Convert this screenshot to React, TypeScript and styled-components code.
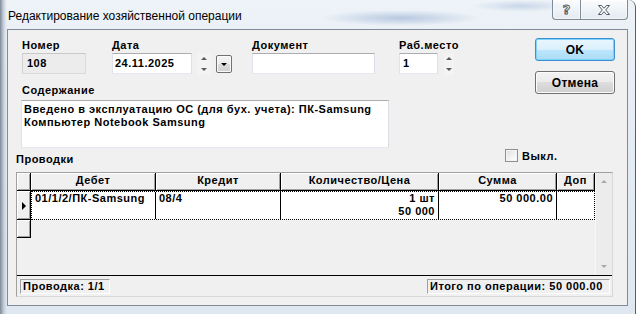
import React from 'react';
import styled, { createGlobalStyle } from 'styled-components';

const GlobalStyle = createGlobalStyle`
	html, body {
		margin: 0;
		padding: 0;
		background: #ffffff;
	}
	body {
		font-family: "Liberation Sans", Arial, sans-serif;
		color: #000;
	}
`;

const Window = styled.div`
	width: 636px;
	height: 314px;
	box-sizing: border-box;
	display: flex;
	flex-direction: column;
	padding: 0 7px 8px 6px;
	border-left: 1px solid #8793a0;
	border-right: 1px solid #55606c;
	border-top-right-radius: 7px;
	overflow: hidden;
	background:
		linear-gradient(90deg, rgba(80, 92, 110, 0.55) 0px, rgba(140, 152, 170, 0.3) 3px, rgba(255, 255, 255, 0) 6px),
		radial-gradient(ellipse 80px 8px at 400px 18px, rgba(60, 105, 170, 0.3), rgba(60, 105, 170, 0)),
		radial-gradient(ellipse 50px 6px at 520px 6px, rgba(90, 130, 190, 0.25), rgba(90, 130, 190, 0)),
		linear-gradient(180deg, #eef3f8 0%, #e6edf4 30%, #dfe7f0 100%);
`;

const TitleBar = styled.div`
	flex: none;
	height: 29px;
	display: flex;
	align-items: flex-start;
`;

const Title = styled.div`
	padding: 9px 0 0 1px;
	font-size: 12px;
	line-height: 14px;
	white-space: nowrap;
`;

const Captions = styled.div`
	margin-left: auto;
	display: flex;
`;

const CaptionButton = styled.div<{ $w: number; $side: 'left' | 'right' }>`
	box-sizing: border-box;
	width: ${(p) => p.$w}px;
	height: 20px;
	display: flex;
	align-items: center;
	justify-content: center;
	border: 1px solid #7f8a97;
	border-top: none;
	${(p) => (p.$side === 'left' ? 'border-right: none; border-bottom-left-radius: 4px;' : 'border-bottom-right-radius: 4px;')}
	background: linear-gradient(180deg, rgba(255, 255, 255, 0.75) 0%, rgba(240, 244, 248, 0.6) 50%, rgba(220, 228, 236, 0.6) 100%);
	box-shadow: inset 0 0 0 1px rgba(255, 255, 255, 0.5);
`;

const HelpGlyph = styled.span`
	font-family: "DejaVu Sans", sans-serif;
	font-size: 13px;
	font-weight: bold;
	line-height: 13px;
	color: #ffffff;
	-webkit-text-stroke: 1px #4d5966;
	margin-top: -1px;
`;

const Client = styled.div`
	flex: none;
	height: 277px;
	box-sizing: border-box;
	border: 1px solid #7f8b98;
	background: #f0f0f0;
	padding: 8px 14px 0 8px;
	display: flex;
	flex-direction: column;
	font-size: 11px;
	font-weight: bold;
	letter-spacing: 0.5px;
`;

const TopArea = styled.div`
	display: flex;
	align-items: flex-start;
	padding-left: 6px;
	margin-right: -2px;
	height: 109px;
`;

const FieldsBlock = styled.div`
	display: flex;
	flex-direction: column;
	padding-top: 1px;
`;

const FieldsRow = styled.div`
	display: flex;
	align-items: flex-start;
`;

const Field = styled.div<{ $gap?: number }>`
	display: flex;
	flex-direction: column;
	margin-left: ${(p) => p.$gap ?? 0}px;
`;

const FieldLabel = styled.div`
	height: 14px;
	line-height: 13px;
	white-space: nowrap;
`;

const InputLine = styled.div`
	display: flex;
	align-items: flex-start;
`;

const TextBox = styled.div<{ $w: number; $pad?: number; $readOnly?: boolean }>`
	box-sizing: border-box;
	width: ${(p) => p.$w}px;
	height: 21px;
	border: 1px solid;
	border-color: ${(p) => (p.$readOnly ? '#c9c9c9 #dadada #dadada #d2d2d2' : '#abadb3 #dbdfe6 #e3e9ef #e2e3ea')};
	background: ${(p) => (p.$readOnly ? '#ececec' : '#ffffff')};
	padding: 0 ${(p) => p.$pad ?? 3}px;
	line-height: 19px;
	white-space: nowrap;
`;

const Spin = styled.div<{ $w: number }>`
	box-sizing: border-box;
	width: ${(p) => p.$w}px;
	height: 22px;
	margin-left: 6px;
	display: flex;
	flex-direction: column;
	justify-content: space-between;
	align-items: center;
	padding: 4px 0 4px;
	background: #f3f3f3;
`;

const Arrow = styled.span<{ $dir: 'up' | 'down'; $size?: number; $color?: string }>`
	width: 0;
	height: 0;
	border-left: ${(p) => p.$size ?? 3}px solid transparent;
	border-right: ${(p) => p.$size ?? 3}px solid transparent;
	${(p) =>
		p.$dir === 'up'
			? `border-bottom: ${p.$size ?? 3}px solid ${p.$color ?? '#5a5a5a'};`
			: `border-top: ${p.$size ?? 3}px solid ${p.$color ?? '#5a5a5a'};`}
`;

const DropButton = styled.div`
	box-sizing: border-box;
	width: 16px;
	height: 18px;
	margin: 2px 0 0 6px;
	border: 1px solid #707070;
	border-radius: 2px;
	background: linear-gradient(180deg, #f4f4f4 0%, #ebebeb 50%, #dddddd 50%, #d0d0d0 100%);
	box-shadow: inset 0 0 0 1px #fbfbfb;
	display: flex;
	align-items: center;
	justify-content: center;
`;

const SectionLabel = styled.div`
	margin-top: 9px;
	height: 16px;
	line-height: 13px;
`;

const Memo = styled.div`
	box-sizing: border-box;
	width: 368px;
	height: 48px;
	margin-left: -1px;
	background: #ffffff;
	border: 1px solid;
	border-color: #abadb3 #dbdfe6 #e3e9ef #e2e3ea;
	padding: 2px;
	line-height: 13px;
	white-space: nowrap;
`;

const ButtonsColumn = styled.div`
	margin-left: auto;
	display: flex;
	flex-direction: column;
	gap: 10px;
`;

const DialogButton = styled.div<{ $primary?: boolean }>`
	box-sizing: border-box;
	width: 80px;
	height: 23px;
	border-radius: 3px;
	display: flex;
	align-items: center;
	justify-content: center;
	font-size: 12px;
	letter-spacing: 0.3px;
	border: 1px solid ${(p) => (p.$primary ? '#3c8fd0' : '#707070')};
	background: ${(p) =>
		p.$primary
			? 'linear-gradient(180deg, #eaf6fd 0%, #d9f0fc 50%, #bee6fd 50%, #a9dbf6 100%)'
			: 'linear-gradient(180deg, #f2f2f2 0%, #ebebeb 50%, #dddddd 50%, #cfcfcf 100%)'};
	box-shadow: inset 0 0 0 1px ${(p) => (p.$primary ? '#7fd2fa' : '#fcfcfc')};
`;

const PostingsBar = styled.div`
	height: 25px;
	display: flex;
	align-items: flex-start;
`;

const PostingsLabel = styled.div`
	padding-top: 6px;
	line-height: 13px;
`;

const CheckGroup = styled.div`
	margin-left: auto;
	width: 108px;
	display: flex;
	align-items: flex-start;
	padding-top: 2px;
`;

const CheckBox = styled.div`
	box-sizing: border-box;
	width: 13px;
	height: 13px;
	border: 1px solid #8e8f8f;
	background: linear-gradient(135deg, #dcdcdc 0%, #f4f4f4 60%, #ffffff 100%);
	box-shadow: inset 0 0 0 1px #f4f4f4;
`;

const CheckLabel = styled.div`
	margin-left: 4px;
	padding-top: 1px;
	line-height: 13px;
`;

const Grid = styled.div`
	box-sizing: border-box;
	height: 125px;
	border: 1px solid;
	border-color: #a0a0a0 #d8d8d8 #d8d8d8 #a0a0a0;
	display: flex;
	flex-direction: column;
`;

const TableArea = styled.div`
	height: 102px;
	display: flex;
`;

const Table = styled.div`
	flex: 1;
	display: flex;
	flex-direction: column;
	background: #f0f0f0;
`;

const Row = styled.div`
	display: flex;
	align-items: flex-start;
`;

const HeadCell = styled.div<{ $w: number }>`
	box-sizing: border-box;
	width: ${(p) => p.$w}px;
	height: 18px;
	border-right: 1px solid #000;
	border-bottom: 1px solid #000;
	box-shadow: inset 1px 1px 0 #ffffff, inset -1px -1px 0 #a0a0a0;
	text-align: center;
	line-height: 15px;
	white-space: nowrap;
	overflow: hidden;
`;

const Indicator = styled.div<{ $h: number }>`
	box-sizing: border-box;
	width: 14px;
	height: ${(p) => p.$h}px;
	border-right: 1px solid #000;
	border-bottom: 1px solid #000;
	box-shadow: inset 1px 1px 0 #ffffff, inset -1px -1px 0 #a0a0a0;
	display: flex;
	align-items: center;
	padding-left: 5px;
`;

const RowMark = styled.span`
	width: 0;
	height: 0;
	border-top: 4px solid transparent;
	border-bottom: 4px solid transparent;
	border-left: 4px solid #000;
	margin-top: 2px;
`;

const DataCells = styled.div`
	box-sizing: border-box;
	height: 29px;
	border: 1px dotted #000;
	background: #ffffff;
	display: flex;
`;

const Cell = styled.div<{ $w: number; $align?: 'left' | 'right'; $last?: boolean }>`
	box-sizing: border-box;
	width: ${(p) => p.$w}px;
	height: 27px;
	border-right: ${(p) => (p.$last ? 'none' : '1px solid #000')};
	padding: 0 3px;
	text-align: ${(p) => p.$align ?? 'left'};
	line-height: 13px;
	white-space: nowrap;
	overflow: hidden;
`;

const ScrollBar = styled.div`
	box-sizing: border-box;
	width: 17px;
	display: flex;
	flex-direction: column;
	justify-content: space-between;
	align-items: center;
	padding: 7px 0 7px;
	background: #ececec;
	border-left: 1px solid #f7f7f7;
`;

const StatusBar = styled.div`
	box-sizing: border-box;
	height: 21px;
	border-top: 1px solid #000;
	display: flex;
	justify-content: space-between;
	padding: 3px 2px 0 3px;
`;

const StatusPanel = styled.div<{ $w: number }>`
	box-sizing: border-box;
	width: ${(p) => p.$w}px;
	height: 15px;
	border: 1px solid;
	border-color: #a0a0a0 #ffffff #ffffff #a0a0a0;
	padding: 0 2px;
	line-height: 13px;
	white-space: nowrap;
`;

const CloseIcon = () => (
	<svg width="12" height="10" viewBox="0 0 12 10">
		<polygon
			points="0.5,0.5 3.5,0.5 6,3.3 8.5,0.5 11.5,0.5 7.7,5 11.5,9.5 8.5,9.5 6,6.7 3.5,9.5 0.5,9.5 4.3,5"
			fill="#ffffff"
			stroke="#4d5966"
			strokeWidth="1"
		/>
	</svg>
);

const columns = [
	{ title: 'Дебет', w: 125 },
	{ title: 'Кредит', w: 125 },
	{ title: 'Количество/Цена', w: 158 },
	{ title: 'Сумма', w: 118 },
	{ title: 'Доп', w: 38 },
];

export default function App() {
	return (
		<>
			<GlobalStyle />
			<Window>
				<TitleBar>
					<Title>Редактирование хозяйственной операции</Title>
					<Captions>
						<CaptionButton $w={28} $side="left">
							<HelpGlyph>?</HelpGlyph>
						</CaptionButton>
						<CaptionButton $w={48} $side="right">
							<CloseIcon />
						</CaptionButton>
					</Captions>
				</TitleBar>

				<Client>
					<TopArea>
						<FieldsBlock>
							<FieldsRow>
								<Field>
									<FieldLabel>Номер</FieldLabel>
									<TextBox $w={64} $pad={4} $readOnly>
										108
									</TextBox>
								</Field>
								<Field $gap={26}>
									<FieldLabel>Дата</FieldLabel>
									<InputLine>
										<TextBox $w={80} $pad={2}>
											24.11.2025
										</TextBox>
										<Spin $w={12}>
											<Arrow $dir="up" />
											<Arrow $dir="down" />
										</Spin>
										<DropButton>
											<Arrow $dir="down" $color="#000" />
										</DropButton>
									</InputLine>
								</Field>
								<Field $gap={20}>
									<FieldLabel>Документ</FieldLabel>
									<TextBox $w={123} />
								</Field>
								<Field $gap={24}>
									<FieldLabel>Раб.место</FieldLabel>
									<InputLine>
										<TextBox $w={39}>1</TextBox>
										<Spin $w={10}>
											<Arrow $dir="up" />
											<Arrow $dir="down" />
										</Spin>
									</InputLine>
								</Field>
							</FieldsRow>
							<SectionLabel>Содержание</SectionLabel>
							<Memo>
								Введено в эксплуатацию ОС (для бух. учета): ПК-Samsung
								<br />
								Компьютер Notebook Samsung
							</Memo>
						</FieldsBlock>
						<ButtonsColumn>
							<DialogButton $primary>OK</DialogButton>
							<DialogButton>Отмена</DialogButton>
						</ButtonsColumn>
					</TopArea>

					<PostingsBar>
						<PostingsLabel>Проводки</PostingsLabel>
						<CheckGroup>
							<CheckBox />
							<CheckLabel>Выкл.</CheckLabel>
						</CheckGroup>
					</PostingsBar>

					<Grid>
						<TableArea>
							<Table>
								<Row>
									<HeadCell $w={14} />
									{columns.map((c) => (
										<HeadCell key={c.title} $w={c.w}>
											{c.title}
										</HeadCell>
									))}
								</Row>
								<Row>
									<Indicator $h={29}>
										<RowMark />
									</Indicator>
									<DataCells>
										<Cell $w={124}>01/1/2/ПК-Samsung</Cell>
										<Cell $w={125}>08/4</Cell>
										<Cell $w={158} $align="right">
											1 шт
											<br />
											50 000
										</Cell>
										<Cell $w={118} $align="right">
											50 000.00
										</Cell>
										<Cell $w={37} $last />
									</DataCells>
								</Row>
								<Row>
									<Indicator $h={18} />
								</Row>
							</Table>
							<ScrollBar>
								<Arrow $dir="up" $color="#a8a8a8" />
								<Arrow $dir="down" $color="#a8a8a8" />
							</ScrollBar>
						</TableArea>
						<StatusBar>
							<StatusPanel $w={90}>Проводка: 1/1</StatusPanel>
							<StatusPanel $w={183}>Итого по операции: 50 000.00</StatusPanel>
						</StatusBar>
					</Grid>
				</Client>
			</Window>
		</>
	);
}
